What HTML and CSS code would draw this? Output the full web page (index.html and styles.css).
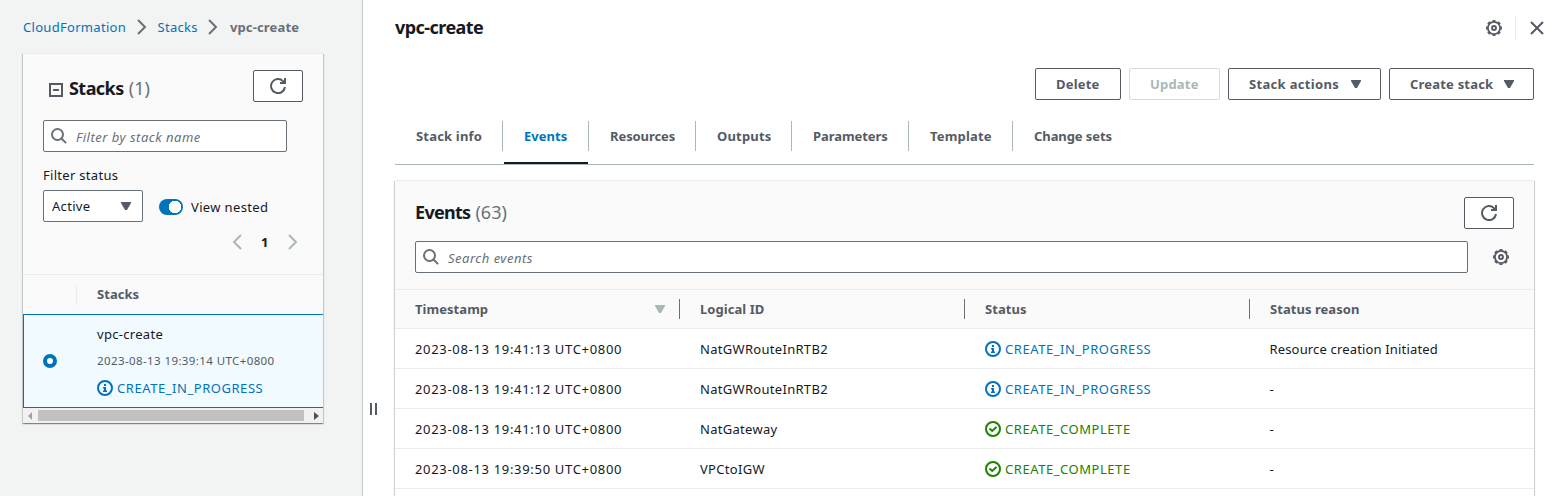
FILE: index.html
```html
<!DOCTYPE html>
<html lang="en">
<head>
<meta charset="utf-8">
<title>CloudFormation - Stack vpc-create</title>
<link rel="stylesheet" href="styles.css">
</head>
<body>
<svg class="defs" aria-hidden="true">
  <symbol id="chevron" viewBox="0 0 16 16"><path d="M4 1l7 7-7 7" fill="none" stroke="currentColor" stroke-width="2"/></symbol>
  <symbol id="refresh" viewBox="0 0 16 16"><path d="M15 9A7 7 0 1 1 13 3.100l1.500 1.500" fill="none" stroke="currentColor" stroke-width="2"/><path d="M14 0h2v6h-6V4h4z" fill="currentColor"/></symbol>
  <symbol id="search" viewBox="0 0 16 16"><circle cx="6.500" cy="6.500" r="5.500" fill="none" stroke="currentColor" stroke-width="2"/><path d="M10.500 10.500l4.600 4.600" stroke="currentColor" stroke-width="2"/></symbol>
  <symbol id="gear" viewBox="0 0 16 16"><circle cx="8" cy="8" r="6.100" fill="none" stroke="currentColor" stroke-width="1.800"/><circle cx="8" cy="8" r="7.200" fill="none" stroke="currentColor" stroke-width="1.600" pathLength="80" stroke-dasharray="5.600 4.400" stroke-dashoffset="2.800"/><circle cx="8" cy="8" r="2" fill="none" stroke="currentColor" stroke-width="1.900"/></symbol>
  <symbol id="info" viewBox="0 0 16 16"><circle cx="8" cy="8" r="7" fill="none" stroke="currentColor" stroke-width="2"/><path d="M7 4h2v2H7zM6 7h3v3.500h1V12H6v-1.500h1V8.500H6z" fill="currentColor"/></symbol>
  <symbol id="check" viewBox="0 0 16 16"><circle cx="8" cy="8" r="7" fill="none" stroke="currentColor" stroke-width="2"/><path d="M4.500 7.500L7.200 10l4.300-4" fill="none" stroke="currentColor" stroke-width="1.900"/></symbol>
  <symbol id="caret" viewBox="0 0 10 8"><path d="M0 0h10v1L6 8H4L0 1z" fill="currentColor"/></symbol>
</svg>
<div class="app">
  <aside class="side">
    <nav class="crumbs"><a>CloudFormation</a><svg class="icon"><use href="#chevron"/></svg><a>Stacks</a><svg class="icon"><use href="#chevron"/></svg><b>vpc-create</b></nav>
    <section class="card stacks">
      <header class="stacks-head">
        <div class="row title-row">
          <svg class="collapse" viewBox="0 0 14 14"><path d="M1 1h12v12H1zM4 7h6" fill="none" stroke="currentColor" stroke-width="2"/></svg>
          <h2>Stacks <span class="count">(1)</span></h2>
          <button class="btn refresh"><svg class="icon"><use href="#refresh"/></svg></button>
        </div>
        <div class="field"><svg class="icon"><use href="#search"/></svg><i>Filter by stack name</i></div>
        <div class="label">Filter status</div>
        <div class="row">
          <div class="select"><span>Active</span><svg class="caret"><use href="#caret"/></svg></div>
          <span class="toggle"></span><span class="nested">View nested</span>
        </div>
        <div class="pages"><svg class="icon flip"><use href="#chevron"/></svg><b>1</b><svg class="icon"><use href="#chevron"/></svg></div>
      </header>
      <div class="stacks-th"><span></span><b>Stacks</b></div>
      <div class="stack-item">
        <span class="radio"></span>
        <div class="stack-text">
          <div>vpc-create</div>
          <div class="when">2023-08-13 19:39:14 UTC+0800</div>
          <div class="status blue"><svg class="icon"><use href="#info"/></svg>CREATE_IN_PROGRESS</div>
        </div>
      </div>
      <div class="scroll"><i class="left"></i><span></span><i class="right"></i></div>
    </section>
  </aside>
  <div class="handle"><i></i><i></i></div>
  <main>
    <div class="top"><h1>vpc-create</h1><svg class="icon"><use href="#gear"/></svg><span class="sep"></span><svg class="icon" viewBox="0 0 16 16"><path d="M2 2l12 12M14 2L2 14" stroke="currentColor" stroke-width="2"/></svg></div>
    <div class="actions">
      <button class="btn delete">Delete</button>
      <button class="btn update">Update</button>
      <button class="btn stack-actions">Stack actions<svg class="caret"><use href="#caret"/></svg></button>
      <button class="btn create">Create stack<svg class="caret"><use href="#caret"/></svg></button>
    </div>
    <nav class="tabs">
      <a class="wide">Stack info</a><a class="on">Events</a><a class="tight">Resources</a><a class="wide">Outputs</a><a class="tight">Parameters</a><a class="wide">Template</a><a class="tight">Change sets</a>
    </nav>
    <section class="card events">
      <header class="events-head">
        <div class="row"><h2 class="events-title">Events <span class="count">(63)</span></h2><button class="btn refresh"><svg class="icon"><use href="#refresh"/></svg></button></div>
        <div class="row search-row"><div class="field"><svg class="icon"><use href="#search"/></svg><i>Search events</i></div><svg class="icon"><use href="#gear"/></svg></div>
      </header>
      <div class="tr th"><div>Timestamp<svg class="caret"><use href="#caret"/></svg></div><div>Logical ID</div><div>Status</div><div>Status reason</div></div>
      <div class="tr"><div class="time">2023-08-13 19:41:13 UTC+0800</div><div>NatGWRouteInRTB2</div><div class="blue status"><svg class="icon"><use href="#info"/></svg>CREATE_IN_PROGRESS</div><div class="reason">Resource creation Initiated</div></div>
      <div class="tr"><div class="time">2023-08-13 19:41:12 UTC+0800</div><div>NatGWRouteInRTB2</div><div class="blue status"><svg class="icon"><use href="#info"/></svg>CREATE_IN_PROGRESS</div><div class="reason">-</div></div>
      <div class="tr"><div class="time">2023-08-13 19:41:10 UTC+0800</div><div>NatGateway</div><div class="green status"><svg class="icon"><use href="#check"/></svg>CREATE_COMPLETE</div><div class="reason">-</div></div>
      <div class="tr"><div class="time">2023-08-13 19:39:50 UTC+0800</div><div>VPCtoIGW</div><div class="green status"><svg class="icon"><use href="#check"/></svg>CREATE_COMPLETE</div><div class="reason">-</div></div>
      <div class="tr"></div>
    </section>
  </main>
</div>
</body>
</html>
```
FILE: styles.css
```css
*{box-sizing:border-box}
body{margin:0;font:13px/20px "Noto Sans",sans-serif;letter-spacing:.3px;color:#16191f;background:#fff}
b{letter-spacing:.05px}
.defs{display:none}
.app{display:flex;height:496px;overflow:hidden}
.icon{width:16px;height:16px;flex:none}
.caret{width:10px;height:8px;flex:none;color:#545b64}
.row{display:flex;align-items:center}
.blue,.crumbs a{color:#0073bb}
.green{color:#1d8102}
h1,h2{margin:0;font-size:18px;line-height:24px;font-weight:700;letter-spacing:-.55px}
.count{font-weight:400;color:#687078;letter-spacing:0;margin-left:1px}
.events-title{letter-spacing:-.7px;margin-top:-2px}
.side{width:363px;flex:none;background:#f2f3f3;border-right:1px solid #c3caca;padding:17px 0 0 23px}
.crumbs{display:flex;align-items:center;height:20px;color:#687078}
.crumbs svg{margin:0 8px 0 7.500px}
.crumbs b{letter-spacing:.15px;margin-left:.5px}
.card{box-shadow:0 1px 1px rgba(0,28,36,.3),1px 1px 1px rgba(0,28,36,.15),-1px 1px 1px rgba(0,28,36,.15);border-top:1px solid #eaeded;background:#fafafa}
.stacks{width:300px;height:370px;margin-top:16px}
.stacks-head{padding:16px 20px 0;height:221px;border-bottom:1px solid #eaeded}
.title-row{height:32px}
.title-row h2{padding-top:3px}
.collapse{width:14px;height:14px;margin:7px 6px 0;color:#545b64}
.btn{height:32px;border:1px solid #545b64;border-radius:2px;background:#fff;color:#545b64;padding:0 20px;font:700 13px/20px "Noto Sans",sans-serif;letter-spacing:.2px;display:flex;align-items:center;justify-content:space-between;white-space:nowrap}
.refresh{width:50px;justify-content:center;padding:0;margin-left:auto}
.field{height:32px;border:1px solid #687078;border-radius:2px;background:#fff;display:flex;align-items:center;gap:9px;padding:0 7px;color:#687078;letter-spacing:.5px}
.field i{padding-top:2px}
.stacks .field{width:244px;margin-top:18px}
.label{margin:13px 0 5px}
.select{width:100px;height:32px;border:1px solid #687078;border-radius:2px;background:#fff;display:flex;align-items:center;justify-content:space-between;padding:0 11px 0 8px}
.toggle{width:24px;height:16px;border-radius:8px;margin:2px 8px 0 16px;background:radial-gradient(circle at 16px 8px,#fff 6px,#0073bb 6.500px)}
.nested{padding-top:2px;letter-spacing:.35px}
.pages{display:flex;justify-content:flex-end;align-items:center;height:20px;margin-top:10px;padding-right:2.500px;gap:16px;color:#aab7b8}
.pages b{color:#16191f}
.flip{transform:scaleX(-1)}
.stacks-th{display:flex;align-items:center;height:39px;color:#545b64}
.stacks-th span{width:54px;height:20px;border-right:1px solid #eaeded;margin-right:20px}
.stacks-th b{padding-bottom:1px}
.stack-item{height:94px;border:1px solid #0073bb;border-right:0;background:#f1faff;display:flex;align-items:center;padding-left:19px}
.radio{width:14px;height:14px;border-radius:50%;border:4px solid #0073bb;background:#fff}
.stack-text{margin-left:40px;display:grid;gap:7px}
.when{font-size:11.500px;letter-spacing:.4px;color:#545b64}
.status{display:flex;align-items:center;gap:4px;letter-spacing:.55px}
.scroll{height:15px;background:#f1f1f1;display:flex;align-items:center;padding-left:5px}
.scroll span{width:266px;height:11px;background:#c1c1c1;margin:0 10px 0 6px}
.scroll i{border:4px solid transparent}
.scroll .left{border-left:0;border-right:4px solid #a3a3a3}
.scroll .right{border-right:0;border-left:5px solid #505050}
.handle{width:32px;flex:none;padding:403px 0 0 7px;display:flex;gap:3px}
.handle i{width:2px;height:12px;background:#545b64}
main{width:1139px;flex:none}
.top{height:68px;padding-top:16px;display:flex;color:#545b64;margin-right:-11px}
.top h1{flex:1;margin-top:-1px;color:#16191f}
.top svg{margin-top:4px}
.sep{width:1px;height:24px;background:#eaeded;margin:0 13px}
.actions{display:flex;gap:8px;justify-content:flex-end}
.delete{width:86px}
.update{width:91px;color:#aab7b8;border-color:#d5dbdb}
.stack-actions{width:153px;padding-right:19px;letter-spacing:.33px}
.create{width:145px;padding-right:19px}
.tabs{display:grid;grid-template-columns:108px 86px 107px 96px 117px 104px 1fr;height:65px;padding-top:21px;border-bottom:1px solid #aab7b8;font-weight:700;letter-spacing:.03px;color:#545b64}
.tabs a{height:30px;padding:5px 0 0 21px;border-right:1px solid #aab7b8}
.tabs a:last-child{border:0}
.tabs .wide{letter-spacing:.18px}
.tabs .tight{letter-spacing:-.08px}
.tabs .on{color:#0073bb}
.tabs .on::after{content:"";display:block;height:2px;width:84px;margin:16px 0 0 -20px;background:#16191f}
.events{margin-top:15px;height:400px}
.events-head{height:109px;padding:16px 20px 0;border-bottom:1px solid #eaeded}
.search-row{margin-top:12px;color:#545b64}
.search-row .field{width:1053px;margin-right:25px}
.tr{display:grid;grid-template-columns:285px 285px 285px 1fr;height:40px;align-items:center;background:#fff;border-bottom:1px solid #eaeded}
.tr>div{padding:0 20px}
.tr .time{letter-spacing:.68px}
.tr .reason{letter-spacing:.16px;padding-left:19.500px}
.th{height:39px;background:#fafafa;font-weight:700;letter-spacing:.05px;color:#545b64}
.th>div{display:flex;align-items:center;justify-content:space-between;border-right:1px solid #687078;padding-right:14px}
.th>div:last-child{border:0}
.th .caret{color:#aab7b8}
```
